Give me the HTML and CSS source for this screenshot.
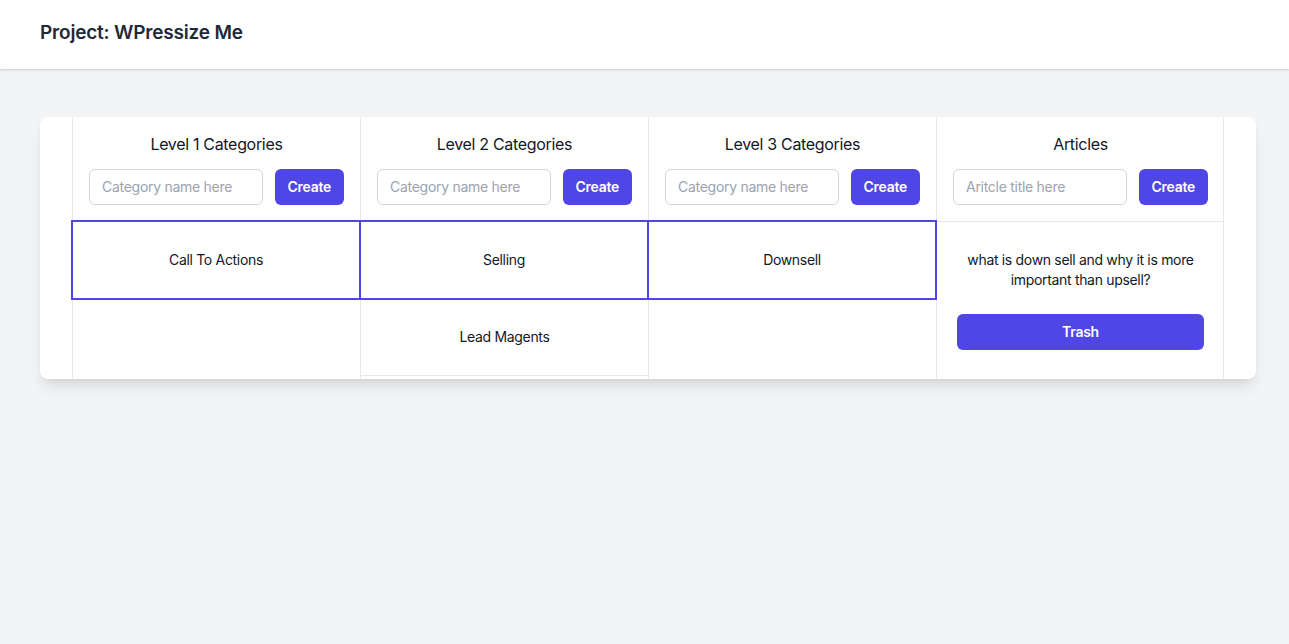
FILE: index.html
```html
<!DOCTYPE html>
<html lang="en">
<head>
<meta charset="utf-8">
<title>WPressize Me</title>
<link rel="stylesheet" href="styles.css">
</head>
<body>
<header class="topbar">
  <h1 class="project-title">Project: WPressize Me</h1>
</header>
<main class="page">
  <section class="board">
    <div class="columns">
      <div class="column">
        <div class="column-head">
          <h2 class="column-title">Level 1 Categories</h2>
          <form class="create-form">
            <input class="text-input" type="text" placeholder="Category name here">
            <button class="btn" type="button">Create</button>
          </form>
        </div>
        <div class="item selected">Call To Actions</div>
      </div>
      <div class="column">
        <div class="column-head">
          <h2 class="column-title">Level 2 Categories</h2>
          <form class="create-form">
            <input class="text-input" type="text" placeholder="Category name here">
            <button class="btn" type="button">Create</button>
          </form>
        </div>
        <div class="item selected">Selling</div>
        <div class="item">Lead Magents</div>
      </div>
      <div class="column">
        <div class="column-head">
          <h2 class="column-title">Level 3 Categories</h2>
          <form class="create-form">
            <input class="text-input" type="text" placeholder="Category name here">
            <button class="btn" type="button">Create</button>
          </form>
        </div>
        <div class="item selected">Downsell</div>
      </div>
      <div class="column">
        <div class="column-head bordered">
          <h2 class="column-title">Articles</h2>
          <form class="create-form">
            <input class="text-input" type="text" placeholder="Aritcle title here">
            <button class="btn" type="button">Create</button>
          </form>
        </div>
        <div class="article">
          <p class="article-title">what is down sell and why it is more important than upsell?</p>
          <button class="btn btn-block" type="button">Trash</button>
        </div>
      </div>
    </div>
  </section>
</main>
</body>
</html>
```

FILE: styles.css
```css
* { box-sizing: border-box; }
html, body { margin: 0; padding: 0; }
body {
  font-family: Inter, "Noto Sans", sans-serif;
  letter-spacing: -0.02em;
  background: #f3f4f6;
  color: #111827;
  min-height: 644px;
}
.topbar {
  background: #fff;
  height: 69px;
  padding: 0 40px;
  display: flex;
  align-items: center;
  box-shadow: 0 1px 3px rgba(0,0,0,0.12), 0 1px 2px rgba(0,0,0,0.06);
  position: relative;
}
.project-title {
  margin: 0;
  font-size: 19px;
  font-weight: 600;
  color: #1f2937;
  line-height: 28px;
  margin-top: -4px;
  letter-spacing: -0.01em;
}
.page {
  padding: 48px 33px 0 40px;
}
.board {
  background: #fff;
  border-radius: 8px;
  box-shadow: 0 10px 15px -3px rgba(0,0,0,0.1), 0 4px 6px -2px rgba(0,0,0,0.05);
  padding: 0 32px;
  overflow: hidden;
}
.columns {
  display: grid;
  grid-template-columns: repeat(4, 288px);
  border-right: 1px solid #e5e7eb;
  width: 1152px;
}
.column {
  border-left: 1px solid #e5e7eb;
  display: flex;
  flex-direction: column;
}
.column-head {
  padding: 15px 16px 16px;
  display: flex;
  flex-direction: column;
  align-items: stretch;
}
.column-head.bordered { border-bottom: 1px solid #e5e7eb; }
.column-title {
  margin: 0 0 13px;
  font-size: 16px;
  font-weight: 400;
  line-height: 24px;
  text-align: center;
  color: #111827;
}
.create-form {
  display: flex;
  gap: 12px;
  margin: 0;
}
.text-input {
  flex: 1;
  min-width: 0;
  height: 36px;
  border: 1px solid #d1d5db;
  border-radius: 6px;
  padding: 0 12px 2px;
  font: inherit;
  font-size: 14px;
  letter-spacing: -0.02em;
  color: #111827;
}
.text-input::placeholder { color: #9ca3af; }
.btn {
  background: #4f46e5;
  color: #fff;
  border: 0;
  border-radius: 6px;
  height: 36px;
  padding: 0 13px 2px;
  font: inherit;
  font-size: 14px;
  font-weight: 600;
  letter-spacing: -0.02em;
}
.item {
  height: 76px;
  display: flex;
  align-items: center;
  justify-content: center;
  font-size: 14px;
  border-bottom: 1px solid #e5e7eb;
  color: #111827;
  padding-bottom: 2px;
}
.item.selected {
  height: 80px;
  border: 2px solid #4f46e5;
  margin: -1px -1px 0 -2px;
  position: relative;
}
.article {
  padding: 28px 20px 29px;
  display: flex;
  flex-direction: column;
  gap: 24px;
}
.article-title {
  margin: 0;
  text-align: center;
  font-size: 14px;
  line-height: 20px;
  color: #111827;
}
.btn-block { width: 100%; }
```
